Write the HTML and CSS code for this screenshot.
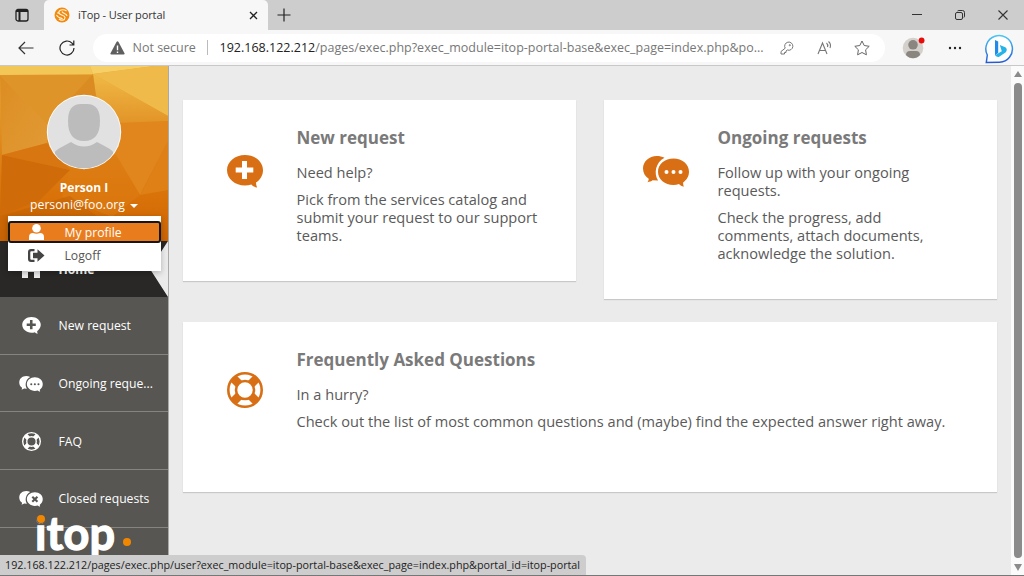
FILE: index.html
```html
<!DOCTYPE html>
<html lang="en">
<head>
<meta charset="utf-8">
<title>iTop - User portal</title>
<link rel="stylesheet" href="styles.css">
</head>
<body>
<svg width="0" height="0" class="defs">
  <defs>
    <symbol id="bubble-plus" viewBox="0 0 36 33">
      <path fill="currentColor" fill-rule="evenodd" d="M18 0C8 0 0 6.700 0 15.200S8 30.400 18 30.400c2.300 0 4.400-.3 6.400-1 1.300 1.500 3.100 2.600 5.700 3.200-.8-1.600-1.100-3.400-1.100-5.100 4.300-2.800 7-7.300 7-12.300C36 6.700 28 0 18 0ZM15 6h5v6.500h6.300v5H20V24h-5v-6.500H8.700v-5H15Z"/>
    </symbol>
    <symbol id="bubble-back" viewBox="0 0 46 31">
      <path fill="currentColor" d="M21.500 1.800C19 .6 16.500 0 13.700 0 6 0 0 5.600 0 12.500c0 4.300 2.200 8 5.700 10.200 0 1.300-.4 2.500-1.300 3.500 2.200-.3 4-.9 5.200-1.900l5.500.2C10.500 17.500 12.500 6.500 21.500 1.800Z"/>
      <path fill="currentColor" d="M30.500 2.500c-8.700 0-15.500 5.900-15.500 13.200S21.800 29 30.500 29c1.900 0 3.800-.3 5.500-.9 1.300 1.300 2.800 2.200 4.800 2.600-.5-1.300-.7-2.800-.7-4.300 3.600-2.500 5.900-6.300 5.900-10.700 0-7.300-6.800-13.200-15.500-13.200Z"/>
    </symbol>
    <symbol id="ring" viewBox="0 0 36 36">
      <circle cx="18" cy="18" r="16.700" fill="none" stroke="currentColor" stroke-width="2.600"/>
      <circle cx="18" cy="18" r="9" fill="none" stroke="currentColor" stroke-width="2.600"/>
      <g stroke="currentColor" stroke-width="8.500"><path d="M6.500 6.500 12 12M29.500 6.500 24 12M6.500 29.500 12 24M29.500 29.500 24 24"/></g>
    </symbol>
  </defs>
</svg>
<div class="window">
  <header class="tabs">
    <svg class="workspace" width="14" height="14" viewBox="0 0 14 14" fill="none" stroke="#222" stroke-width="1.300"><rect x="1" y="1.500" width="12" height="11.500" rx="2"/><path d="M1 3h12M4.500 4v9" stroke-width="2"/></svg>
    <div class="tab">
      <svg width="16" height="16" viewBox="0 0 16 16"><circle cx="8" cy="8" r="7.500" fill="#f28a10"/><path d="M12.500 4C9 1.500 4 3 5 6s6 1.500 6 4.500-4 3.500-6 1.500M8.500 4.500C7 6 13 6.500 13 9M2.500 8c2 4 4 2 6 4M3.500 5.500l1 1" fill="none" stroke="#fff3dc" stroke-width="1.100"/></svg>
      <span class="tab-title">iTop - User portal</span>
      <svg class="tab-close" width="9" height="9" viewBox="0 0 9 9" stroke="#222" stroke-width="1.300"><path d="m1 1 7 7M8 1 1 8"/></svg>
    </div>
    <svg class="plus" width="14" height="14" viewBox="0 0 14 14" stroke="#222" stroke-width="1.200"><path d="M7 .5v13M.5 7h13"/></svg>
    <div class="controls">
      <svg width="10" height="10" viewBox="0 0 10 10" stroke="#333"><path d="M0 4.500h10"/></svg>
      <svg width="10" height="10" viewBox="0 0 10 10" fill="none" stroke="#333"><rect x=".5" y="2.500" width="7" height="7" rx="1.500"/><path d="M2.500 1Q3 .5 4 .5h3.500q2 0 2 2V6q0 1-.6 1.500"/></svg>
      <svg width="10" height="10" viewBox="0 0 10 10" stroke="#333" stroke-width="1.100"><path d="m.5.5 9 9M9.500.5l-9 9"/></svg>
    </div>
  </header>
  <div class="toolbar">
    <svg width="16" height="14" viewBox="0 0 16 14" fill="none" stroke="#333" stroke-width="1.200"><path d="M15.500 7H1M7 1 1 7l6 6"/></svg>
    <svg class="reload" width="16" height="16" viewBox="0 0 16 16" fill="none" stroke="#222" stroke-width="1.200"><path d="M15 8a7 7 0 1 1-2-4.900L14.500 5M14.800.5V5H10.500"/></svg>
    <div class="address">
      <svg width="15" height="14" viewBox="0 0 15 14"><path d="M6.500 1q1-1.500 2 0l6 11.300q.5 1.200-.9 1.200H1.400Q0 13.500.5 12.300Z" fill="#5f5f5f"/><path d="M7.500 4.500v4.700M7.500 10.500V12" stroke="#fff" stroke-width="1.400"/></svg>
      <span class="insecure">Not secure</span>
      <i class="sep"></i>
      <span class="url"><b>192.168.122.212</b>/pages/exec.php?exec_module=itop-portal-base&amp;exec_page=index.php&amp;po...</span>
      <svg class="key" width="14" height="14" viewBox="0 0 14 14" fill="none" stroke="#777"><path d="M5.200 7.200A4.100 4.100 0 1 1 7.300 9L6 10v1.500H4.500V13H1v-2.500Z"/><circle cx="9.800" cy="4.200" r=".6"/></svg>
      <svg class="read" width="16" height="14" viewBox="0 0 16 14" fill="none" stroke="#777" stroke-width="1.100"><path d="M1 13 5.500 2 10 13M2.500 9.500h6M9.500 2q1.800 1.500 1 4M11.500.5q3 2.500 1.500 6.500"/></svg>
      <svg class="star" width="16" height="16" viewBox="0 0 16 16" fill="none" stroke="#666" stroke-linejoin="round"><path d="m8 1 2.200 4.500 5 .8-3.600 3.500.8 5L8 12.500l-4.400 2.300.8-5L.8 6.300l5-.8Z"/></svg>
    </div>
    <svg class="account" width="24" height="24" viewBox="0 0 24 24"><circle cx="11" cy="13" r="10.300" fill="#d4d1cd"/><circle cx="11" cy="9.800" r="4.800" fill="#8b8580"/><path d="M4 20q0-4 4-4h6q4 0 4 4-3 3.300-7 3.300T4 20" fill="#8b8580"/><circle cx="19.600" cy="5.500" r="2.900" fill="#e80b0b"/></svg>
    <svg class="more" width="14" height="4" viewBox="0 0 14 4" fill="#222"><circle cx="2" cy="2" r="1.200"/><circle cx="7" cy="2" r="1.200"/><circle cx="12" cy="2" r="1.200"/></svg>
    <svg class="bing" width="29" height="30" viewBox="0 0 29 30"><defs><linearGradient id="bg" x1="0" y1="0" x2="0" y2="1"><stop stop-color="#48c6f5"/><stop offset="1" stop-color="#245bd5"/></linearGradient></defs><path d="M1.300 28.500l1-7.500A13.300 13.300 0 1 1 14.600 28.200Z" fill="#fff" stroke="url(#bg)" stroke-width="1.500"/><path d="m10 6 3.200 1.600v11.300L10 21.300Z" fill="#218bea"/><path d="m14.800 11 5.500 2.300q2.700 1.800.5 5l-6.600 4.500q-2.300.7-4.200-1.500l6.800-4Z" fill="#26b3e8"/></svg>
  </div>
  <div class="page">
    <aside class="sidebar">
      <section class="user">
        <svg class="facets" viewBox="0 0 168 175" preserveAspectRatio="none">
          <defs><linearGradient id="fg" x1="0" y1="0" x2="0" y2="1"><stop stop-color="#e8ad3c"/><stop offset=".45" stop-color="#df861a"/><stop offset=".75" stop-color="#d97208"/><stop offset="1" stop-color="#cc6505"/></linearGradient>
          <linearGradient id="fh" x1="0" y1="0" x2="1" y2="1"><stop stop-color="#dc8d22"/><stop offset="1" stop-color="#e29a35"/></linearGradient>
          <linearGradient id="fr" x1="0" y1="0" x2="0" y2="1"><stop stop-color="#f0b946"/><stop offset="1" stop-color="#e29427"/></linearGradient></defs>
          <path fill="url(#fg)" d="M0 0h168v175H0Z"/>
          <path fill="#f3c658" d="M0 0h90l3 8-93 1Z"/><path fill="#f6cf66" d="M90 0h64L93 8Z"/>
          <path fill="#efba4a" d="M154 0h14v50L93 8Z"/><path fill="url(#fr)" d="m93 8 75 42v5l-50 2L96 29Z"/>
          <path fill="#de9428" d="M0 9h93L47 58Z"/><path fill="#da8c22" d="m93 8 3 22-49 28Z"/><path fill="url(#fh)" d="m0 9 47 49v19L2 89Z"/>
          <path fill="#e0861c" d="M118 57l50-2v20l-28 54-24-40Z"/><path fill="#d87711" d="m2 89 45-12 23 27Z"/>
          <path fill="#cf6c09" d="m2 89 68 15-30 30L0 150Z"/><path fill="#de8015" d="m168 75-28 54 28-5Z"/>
          <path fill="#dc7c12" d="m70 104 46-15 24 40-28 22-50-20Z" opacity=".6"/>
          <path fill="#c26205" d="M0 150 70 130l60 45H0Z" opacity=".5"/>
        </svg>
        <svg class="avatar" width="76" height="76" viewBox="0 0 76 76"><clipPath id="ac"><circle cx="38" cy="38" r="36.300"/></clipPath><circle cx="38" cy="38" r="37.200" fill="#fff"/><g clip-path="url(#ac)"><path fill="#e1e1e1" d="M0 0h76v76H0Z"/><path d="M22 27q0-17 13-17h6q13 0 13 17 0 20-16 20T22 27" fill="#bcbcbc"/><path d="M9 58q0-2 16-10 13 9 26 0 16 8 16 10v18H9Z" fill="#bcbcbc"/></g></svg>
        <div class="name">Person I</div>
        <div class="mail">personi@foo.org <i class="caret"></i></div>
      </section>
      <nav class="nav">
        <a class="item home"><svg class="home-icon" width="20" height="18" viewBox="0 0 20 18" fill="#eee"><path d="m10 0 10 9h-1v9h-6v-6H7v6H1V9H0Z"/></svg><span>Home</span></a>
        <a class="item"><svg width="19" height="17"><use href="#bubble-plus"/></svg><span>New request</span></a>
        <a class="item"><svg width="24" height="16" viewBox="0 0 46 31"><use href="#bubble-back"/><g fill="#575652"><circle cx="23.500" cy="16" r="2"/><circle cx="30.500" cy="16" r="2"/><circle cx="37.500" cy="16" r="2"/></g></svg><span>Ongoing reque...</span></a>
        <a class="item"><svg width="19" height="19"><use href="#ring"/></svg><span>FAQ</span></a>
        <a class="item"><svg width="24" height="16" viewBox="0 0 46 31"><use href="#bubble-back"/><path d="m25.500 11 10 10m0-10-10 10" stroke="#575652" stroke-width="4"/></svg><span>Closed requests</span></a>
      </nav>
      <div class="menu">
        <a class="entry active"><svg width="15" height="16" viewBox="0 0 15 16" fill="#fff"><circle cx="7.500" cy="4.300" r="4.300"/><path d="M0 16v-3q0-4 4-4 3.500 1.500 7 0 4 0 4 4v3Z"/></svg><span>My profile</span></a>
        <a class="entry"><svg width="17" height="13" viewBox="0 0 17 13" fill="#444"><path d="M6.500 0H3Q0 0 0 3v7q0 3 3 3h3.500v-2.200H3.300q-1 0-1-1V3.200q0-1 1-1h3.200ZM5 3.700H9.500V.3L16.500 6.500 9.500 12.700V9.300H5Z"/></svg><span>Logoff</span></a>
      </div>
      <div class="logo"><span>itop</span><i class="dot-i"></i><i class="dot-end"></i></div>
    </aside>
    <main class="content">
      <section class="card">
        <div class="icon"><svg width="36" height="33"><use href="#bubble-plus"/></svg></div>
        <div class="body"><h2>New request</h2><p>Need help?</p><p>Pick from the services catalog and<br>submit your request to our support<br>teams.</p></div>
      </section>
      <section class="card tall">
        <div class="icon"><svg width="46" height="31" viewBox="0 0 46 31"><use href="#bubble-back"/><g fill="#fff"><circle cx="23.500" cy="16" r="2"/><circle cx="30.500" cy="16" r="2"/><circle cx="37.500" cy="16" r="2"/></g></svg></div>
        <div class="body"><h2>Ongoing requests</h2><p>Follow up with your ongoing<br>requests.</p><p>Check the progress, add<br>comments, attach documents,<br>acknowledge the solution.</p></div>
      </section>
      <section class="card wide">
        <div class="icon"><svg width="36" height="36"><use href="#ring"/></svg></div>
        <div class="body"><h2>Frequently Asked Questions</h2><p>In a hurry?</p><p>Check out the list of most common questions and (maybe) find the expected answer right away.</p></div>
      </section>
    </main>
    <div class="scroll"><i class="up"></i><i class="thumb"></i><i class="down"></i></div>
  </div>
  <div class="status">192.168.122.212/pages/exec.php/user?exec_module=itop-portal-base&amp;exec_page=index.php&amp;portal_id=itop-portal</div>
</div>
</body>
</html>
```
FILE: styles.css
```css
* { box-sizing: border-box; }
body { margin: 0; font-family: "Open Sans", "Noto Sans", sans-serif; }
svg { display: block; flex: none; }
.defs { position: absolute; }
.window { position: relative; width: 1024px; height: 576px; overflow: hidden; display: flex; flex-direction: column; border-bottom: 1px solid #777; background: #ebebeb; }

.tabs { height: 30px; flex: none; display: flex; align-items: center; background: #cdcdcd; padding-left: 15px; }
.tab { align-self: flex-end; width: 224px; height: 30px; margin-left: 15px; padding: 0 10px 0 10px; display: flex; align-items: center; background: #f7f7f7; border-radius: 5px 5px 0 0; }
.tab-title { margin-left: 8px; margin-top: -1px; font-size: 11px; letter-spacing: -.1px; color: #333; white-space: nowrap; }
.tab-close { margin-left: auto; }
.plus { margin-left: 9px; }
.controls { margin-left: auto; margin-right: 16px; display: flex; gap: 33px; }

.toolbar { height: 36px; flex: none; display: flex; align-items: center; background: #f7f7f7; border-bottom: 1px solid #c8c8c8; padding-left: 18px; }
.reload { margin-left: 25px; }
.address { width: 792px; height: 28px; margin-left: 18px; padding-left: 17px; border-radius: 14px; background: #fff; display: flex; align-items: center; white-space: nowrap; font-size: 12.500px; color: #777; }
.insecure { width: 64px; margin-left: 7.500px; }
.sep { width: 1px; height: 15px; margin: 0 12px 0 10px; background: #bbb; }
.url { width: 546px; letter-spacing: .008px; }
.url b { font-weight: 400; color: #222; }
.key { margin-left: 14px; }
.read { margin-left: 23px; }
.star { margin-left: 21px; }
.account { margin-left: 17px; margin-bottom: 2px; }
.more { margin-left: 22px; }
.bing { margin-left: 23px; margin-top: 2px; }

.page { flex: 1; min-height: 0; display: flex; }
.sidebar { position: relative; width: 169px; flex: none; border-right: 1px solid #aaa9a7; background: #575652; margin-bottom: -1px; }
.user { position: relative; height: 175px; padding-top: 28px; display: flex; flex-direction: column; align-items: center; color: #fff; }
.facets { position: absolute; inset: 0; width: 168px; height: 175px; }
.avatar { position: relative; }
.name { position: relative; margin-top: 9px; font-size: 12px; line-height: 17px; font-weight: 700; }
.mail { position: relative; font-size: 12.200px; line-height: 17px; display: flex; align-items: center; gap: 5px; }
.caret { border: 4px solid transparent; border-top-color: #fff; border-bottom: 0; margin-top: 3px; }
.item { height: 57.700px; display: grid; grid-template-columns: 26px 1fr; column-gap: 14px; align-items: center; justify-items: center; padding-left: 18px; padding-top: 1px; color: #fff; font-size: 12.200px; border-bottom: 1px solid #858480; white-space: nowrap; }
.item span { justify-self: start; margin-left: .5px; }
.item.home { height: 56px; padding-top: 0; background: #292826; clip-path: polygon(0 0, 100% 0, 150px 28px, 100% 100%, 0 100%); font-weight: 700; border: 0; }
.nav { background: linear-gradient(#ebebeb 56px, transparent 56px); }
.menu { position: absolute; left: 7.500px; top: 150px; width: 153px; height: 55px; padding-top: 5px; background: #fff; box-shadow: 0 2px 6px rgba(0,0,0,.25); }
.entry { height: 22px; display: grid; grid-template-columns: 17px 1fr; column-gap: 20px; align-items: center; justify-items: center; padding-left: 20px; font-size: 12.200px; color: #555; }
.entry + .entry { margin-top: 1px; }
.entry span { justify-self: start; }
.entry.active { padding-left: 18px; background: #e97d1e; color: #fff; border: 2px solid #161616; border-radius: 3px; }
.logo { position: absolute; left: 35px; top: 442px; width: 100px; height: 50px; color: #fff; font: 700 45px/50px Lato, sans-serif; letter-spacing: .2px; }
.logo span { -webkit-text-stroke: 1.300px #fff; }
.dot-i, .dot-end { position: absolute; width: 8px; height: 8px; border-radius: 50%; background: #f18700; }
.dot-i { left: 2px; top: 7px; box-shadow: 0 0 0 1px #575652; }
.dot-end { left: 88px; top: 30px; }

.content { flex: 1; padding: 34px 14.500px 0 13.500px; display: grid; grid-template-columns: 393px 393px; column-gap: 28px; row-gap: 23px; align-content: start; align-items: start; }
.card { height: 181px; display: grid; grid-template-columns: 114px 1fr; background: #fff; box-shadow: 0 1px 1px rgba(0,0,0,.15); }
.card.tall { height: 199px; }
.card.wide { height: 170px; grid-column: 1 / 3; }
.icon { height: 36px; margin-top: 53px; padding-left: 10px; display: flex; justify-content: center; align-items: center; color: #d96f14; }
.body { padding-top: 26px; color: #5a5a5a; font-size: 14.590px; line-height: 18.200px; white-space: nowrap; }
.body h2 { margin: 0 0 13px; font-size: 17px; line-height: 24px; font-weight: 700; color: #7a7a7a; }
.body p { margin: 0 0 8.300px; }
.wide .icon { margin-top: 50px; }
.scroll { width: 13px; background: #fbfbfb; display: flex; flex-direction: column; align-items: center; padding: 5px 0 4px 1px; }
.up { border: 4.500px solid transparent; border-bottom: 6px solid #8b8b8b; border-top: 0; }
.thumb { width: 8px; height: 476px; margin-top: 6px; border-radius: 4px; background: #8b8b8b; }
.down { margin-top: 6px; border: 4.500px solid transparent; border-top: 7px solid #8b8b8b; border-bottom: 0; }
.status { position: absolute; left: 0; top: 555px; width: 586px; height: 20px; padding-left: 5px; background: #cdcdcd; border-radius: 0 4px 0 0; font-size: 10.750px; line-height: 20px; color: #222; white-space: nowrap; }
```
